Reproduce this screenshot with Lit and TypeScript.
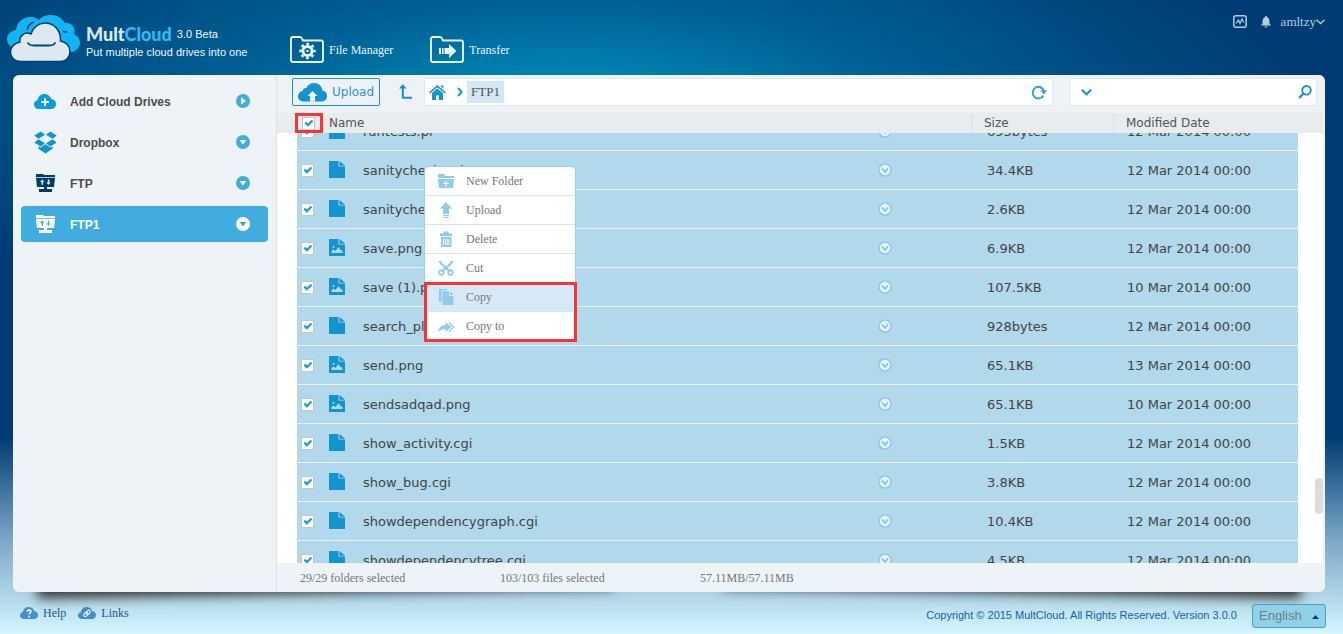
import { LitElement, html, css, svg, nothing } from "lit";
import { customElement, state } from "lit/decorators.js";
import { classMap } from "lit/directives/class-map.js";

interface FileRow {
  name: string;
  kind: "file" | "image";
  size: string;
  date: string;
}

const FILES: FileRow[] = [
  { name: "runtests.pl", kind: "file", size: "693bytes", date: "12 Mar 2014 00:00" },
  { name: "sanitycheck.cgi", kind: "file", size: "34.4KB", date: "12 Mar 2014 00:00" },
  { name: "sanitycheck.pl", kind: "file", size: "2.6KB", date: "12 Mar 2014 00:00" },
  { name: "save.png", kind: "image", size: "6.9KB", date: "12 Mar 2014 00:00" },
  { name: "save (1).png", kind: "image", size: "107.5KB", date: "10 Mar 2014 00:00" },
  { name: "search_plugin.cgi", kind: "file", size: "928bytes", date: "12 Mar 2014 00:00" },
  { name: "send.png", kind: "image", size: "65.1KB", date: "13 Mar 2014 00:00" },
  { name: "sendsadqad.png", kind: "image", size: "65.1KB", date: "10 Mar 2014 00:00" },
  { name: "show_activity.cgi", kind: "file", size: "1.5KB", date: "12 Mar 2014 00:00" },
  { name: "show_bug.cgi", kind: "file", size: "3.8KB", date: "12 Mar 2014 00:00" },
  { name: "showdependencygraph.cgi", kind: "file", size: "10.4KB", date: "12 Mar 2014 00:00" },
  { name: "showdependencytree.cgi", kind: "file", size: "4.5KB", date: "12 Mar 2014 00:00" },
];

const CLOUD = "M5 15C2 15 0 13 0 10.5 0 8.3 1.6 6.6 3.6 6.2 4.2 2.6 7.2 0 11 0c3.400 0 6 2 7 5 3 .2 5 2.300 5 5s-2 5-5 5z";

const icons = {
  addCloud: html`<svg width="22" height="15" viewBox="0 0 23 15" preserveAspectRatio="none"><path d=${CLOUD} fill="#0a9bdc" /><path d="M11.500 4v8M7.500 8h8" stroke="#fff" stroke-width="1.800" /></svg>`,
  dropbox: html`<svg width="23" height="23" viewBox="0 0 23 23" fill="#1294d0"><path d="M6.800.5 11 3.800 4.500 7.700.3 4.500zM16.200.5 12 3.800l6.500 3.900 4.200-3.200zM.3 11.500 4.500 8.200l6.500 4L6.800 15.500zM22.700 11.500l-4.200-3.300-6.500 4 4.200 3.300zM11.500 13l4.700 3.500 2.300-1.300v2.600l-7 4.600-7-4.600v-2.600l2.300 1.300z" /></svg>`,
  ftp: (fg: string, bg: string) => html`<svg width="19" height="18" viewBox="0 0 19 18"><path d="M0 0h7l1 1h11v2.300H0z" fill=${fg} /><path d="M0 4h19l-1 9H1z" fill=${fg} /><path d="M8 12h3v3h5v3H3v-3h5z" fill=${fg} /><path d="M6.300 5.500 8.500 8H7v2.800H5.500V8H4zM12.500 10.800 10.300 8.500h1.500v-3h1.500v3h1.500z" fill=${bg} /></svg>`,
  play: html`<svg width="14" height="14" viewBox="0 0 14 14"><circle cx="7" cy="7" r="7" fill="#41add8" /><path d="M5.200 3.500v7L9.800 7z" fill="#fff" /></svg>`,
  drop: (bg: string, fg: string) => html`<svg width="14" height="14" viewBox="0 0 14 14"><circle cx="7" cy="7" r="7" fill=${bg} /><path d="M3.800 5h6.400L7 9.500z" fill=${fg} /></svg>`,
  logo: html`<svg width="74" height="47" viewBox="0 0 74 47"><g fill="#13b4f4"><path d="M7 33C2 31 0 28 0 24c0-4 3-8 9-9C10 7 16 2 23 2c4 0 7 1 9 3C35 1 40 0 44 0c6 0 11 3 14 8 7-1 11 5 9 11 4 2 6 5 6 9 0 4-3 7-7 9z" /></g><path d="M20 15c1-4 4-7 7-8M60 17c-2 0-3 0-4-1" stroke="#004078" stroke-width="1.500" fill="none" /><path d="M13 46.500C7 46.500 3.500 42 3.500 37c0-5 4-9 9.500-10-1-6 5-11 11-8 2-7 8-11 14-11 9 0 16 7 15.500 18 5.500 1 9.500 5 9.500 10.500 0 6-4 10-10 10z" fill="#dfe7ef" stroke="#004078" stroke-width="1.500" /><path d="M21 28c1 2.500 3 2.500 6 2.500h15c3 0 5 0 6-2.500" stroke="#004a80" stroke-width="1.800" fill="none" stroke-linecap="round" /></svg>`,
  gearFolder: html`<svg width="34" height="27" viewBox="0 0 34 27" fill="none"><path d="M1 24V3q0-2 2-2h7q1.500 0 2.300 2l.5 1.500H31q2 0 2 2V24q0 2-2 2H3q-2 0-2-2z" stroke="#e8f4fb" stroke-width="1.900" /><circle cx="17.500" cy="15" r="4.600" stroke="#e8f4fb" stroke-width="3" /><circle cx="17.500" cy="15" r="7" stroke="#e8f4fb" stroke-width="2.400" stroke-dasharray="2.750 2.750" stroke-dashoffset="1.400" /><circle cx="17.500" cy="15" r="1.300" fill="#e8f4fb" /></svg>`,
  transferFolder: html`<svg width="34" height="27" viewBox="0 0 34 27" fill="none"><path d="M1 24V3q0-2 2-2h7q1.500 0 2.300 2l.5 1.500H31q2 0 2 2V24q0 2-2 2H3q-2 0-2-2z" stroke="#e8f4fb" stroke-width="1.900" /><path d="M9 12h2v6H9zM12 12h1.500v6H12zM14.500 12H19V8l7.500 7-7.500 7v-4h-4.500z" fill="#e8f4fb" /></svg>`,
  activity: html`<svg width="14" height="13" viewBox="0 0 14 13" fill="none" stroke="#b3cddd"><rect x=".8" y=".8" width="12.400" height="11.400" rx="2" stroke-width="1.500" /><path d="M3 8.500 5.500 5l1.500 3.500L9 4l1.800 3.500" stroke-width="1.200" /></svg>`,
  bell: html`<svg width="10" height="12" viewBox="0 0 10 12" fill="#b3cddd"><path d="M5 0q1 0 1 1 2.500.8 2.500 4v2.500L10 9.500H0l1.500-2V5q0-3.200 2.500-4 0-1 1-1zM3.500 10.200h3Q6.300 11.600 5 11.600t-1.500-1.400z" /></svg>`,
  userDown: html`<svg width="9" height="6" viewBox="0 0 9 6" fill="none"><path d="M.5.800 4.500 4.500 8.500.800" stroke="#b3cddd" stroke-width="1.300" /></svg>`,
  upload: html`<svg width="29" height="19" viewBox="0 0 29 19"><path d="M6 18.500C2 18.500 0 16 0 13.200c0-2.700 2-4.800 4.600-5.100C4.800 6 6.500 4.800 8.300 5.200 9.500 2 12.500 0 16 0c4.800 0 8 3 8.300 7.500 3 .4 4.700 2.600 4.700 5.500 0 3-2 5.500-5.500 5.500z" fill="#1493cf" /><path d="M14.500 8 19.500 13H17v5.500h-5V13H9.500z" fill="#eef2f7" /></svg>`,
  upLevel: html`<svg width="13" height="15" viewBox="0 0 13 15"><path d="M3.700 0 7.500 4.500H4.800v8.300H13v2H2.800V4.500H0z" fill="#1493cf" /></svg>`,
  home: html`<svg width="17" height="15" viewBox="0 0 17 15" fill="#1493cf"><path d="M8.300 0 17 7.500l-1 1L8.300 2.300 1 8.500 0 7.500zM12 .5h2.200v3L12 1.800zM3 8l5.300-4.400L14 8v7h-4.200v-4.500H7V15H3z" /></svg>`,
  crumbArrow: html`<svg width="6" height="10" viewBox="0 0 6 10" fill="none"><path d="M1 1l3.800 4L1 9" stroke="#1493cf" stroke-width="1.900" /></svg>`,
  refresh: html`<svg width="16" height="15" viewBox="0 0 16 15"><path d="M12.500 10.500A5.800 5.800 0 1 1 13 6" fill="none" stroke="#2a9fd0" stroke-width="1.900" /><path d="M9.300 5.500H16L12.800 9.300z" fill="#2a9fd0" /></svg>`,
  searchDown: html`<svg width="11" height="7" viewBox="0 0 11 7" fill="none"><path d="M.8.800 5.500 5.300 10.200.800" stroke="#1493cf" stroke-width="2" /></svg>`,
  magnifier: html`<svg width="14" height="14" viewBox="0 0 14 14" fill="none" stroke="#1493cf"><circle cx="8.500" cy="5.300" r="4.300" stroke-width="1.900" /><path d="M5.300 8.700 1 13" stroke-width="2.300" /></svg>`,
  file: html`<svg width="16" height="17" viewBox="0 0 16 17" fill="#1493cf"><path d="M0 0h9.500v5.500H16V17H0z" /><path d="M10.500 0 16 4.700h-5.500z" /></svg>`,
  image: html`<svg width="16" height="17" viewBox="0 0 16 17" fill="#1493cf"><path d="M0 0h9.500v5.500H16V17H0z" /><path d="M10.500 0 16 4.700h-5.500z" /><path d="M2.500 14v-2l2-1.500 2 1.500 3-4 2 3 2 .5V14z" fill="#b1d8eb" /><circle cx="4.500" cy="8" r="1" fill="#b1d8eb" /></svg>`,
  more: html`<svg width="14" height="14" viewBox="0 0 14 14" fill="none" stroke="#7cc0ee"><circle cx="7" cy="7" r="6" fill="#e6f3fb" stroke-width="1.100" /><path d="M4 5.400 7 9l3-3.600" stroke-width="1.600" /></svg>`,
  cloudHelp: html`<svg width="18" height="12" viewBox="0 0 23 15" preserveAspectRatio="none"><path d=${CLOUD} fill="#468dcb" /><path d="M9.300 6q0-2.300 2.300-2.300T14 5.700q0 1.300-1.200 1.900T11.600 9.300M11.600 11v2" stroke="#fff" stroke-width="1.900" fill="none" /></svg>`,
  cloudLink: html`<svg width="18" height="12" viewBox="0 0 23 15" preserveAspectRatio="none"><path d=${CLOUD} fill="#468dcb" /><g transform="rotate(-42 11.500 8)" fill="none" stroke="#fff" stroke-width="1.300"><rect x="6.500" y="6" width="6" height="4" rx="2" /><rect x="10.500" y="6" width="6" height="4" rx="2" /></g></svg>`,
};

const MENU = [
  { label: "New Folder", icon: svg`<path d="M0 1h6l1 2h9v2H0zM0 6h16l-1 9H1z" /><path d="M8 7.500v6M5 10.500h6" stroke="#fff" stroke-width="1.200" />` },
  { label: "Upload", icon: svg`<path d="M8 0l6 6.500h-3V12H5V6.500H2zM5 13h6v1H5zM5 15h6v1H5z" />` },
  { label: "Delete", icon: svg`<path d="M2 2.500h3.500V.5h5v2H14V5H2zM3 6h10.500v10H3z" /><path d="M5.500 8v6M7.300 8v6M9.200 8v6M11 8v6" stroke="#fff" stroke-width=".9" />` },
  { label: "Cut", icon: svg`<g fill="none" stroke="#8fcbea" stroke-width="2.200"><path d="M1.500 1Q3 4 8 8t3 3M14.500 1Q13 4 8 8t-3 3" /><circle cx="3.500" cy="12.500" r="2.300" stroke-width="1.700" /><circle cx="12.500" cy="12.500" r="2.300" stroke-width="1.700" /></g>` },
  { label: "Copy", icon: svg`<path d="M1 0h8v1.300H3.500V13H1zM4.500 2.300h6.500V7h4.500v9h-11zM12 2.300 15.500 6H12z" />` },
  { label: "Copy to", icon: svg`<path d="M0 14Q1 7 7.500 7V4l6 5-6 5v-3Q3 11 0 14z" /><path d="M11 4.500 15.700 9 11 13.500" fill="none" stroke="#8fcbea" stroke-width="1.200" />` },
];

@customElement("file-table")
export class FileTable extends LitElement {
  static styles = css`
    :host {
      display: block;
      position: relative;
      min-height: 0;
      flex: 1;
      font: 13px/18px "DejaVu Sans", Verdana, sans-serif;
      color: #444;
    }
    .port {
      height: 100%;
      overflow-y: auto;
      scrollbar-width: none;
    }
    table {
      width: 100%;
      table-layout: fixed;
      border-spacing: 0;
    }
    th, td { padding: 0; text-align: left; font-weight: normal; }
    .edge-start { width: 20px; }
    .col-check { width: 32px; }
    .col-size { width: 142px; }
    .col-date { width: 185px; }
    .edge-end { width: 25px; }
    th {
      position: sticky;
      top: 0;
      z-index: 1;
      height: 20px;
      background: #e8ecef;
      color: #555;
      font-size: 12px;
    }
    th.split { box-sizing: border-box; padding-left: 12px; border-left: 1px solid #dde1e5; }
    td {
      box-sizing: border-box;
      height: 39px;
      background: #b1d8eb;
      border-bottom: 1px solid #e9f1f5;
    }
    td.blank { background: #fff; border-color: #fff; }
    td.size, td.date { padding-top: 2px; }
    td.size { padding-left: 16px; }
    td.date { padding-left: 14px; }
    .name { display: flex; align-items: center; }
    .name svg { display: block; flex: none; }
    .name .label { flex: 1; padding: 2px 0 0 18px; }
    .glyph { padding-bottom: 2px; }
    .more { border: 0; background: none; padding: 0; margin-right: 79px; cursor: pointer; }
    .tick {
      appearance: none;
      display: block;
      box-sizing: border-box;
      width: 13px;
      height: 13px;
      margin: 0 0 0 4px;
      border: 1px solid #c3c7ca;
      background: #fff;
    }
    .tick:checked {
      background: #fff url("data:image/svg+xml,%3Csvg xmlns='http://www.w3.org/2000/svg' viewBox='0 0 10 10'%3E%3Cpath d='M1.300 4.600l2.600 2.500 4.600-4.600' fill='none' stroke='%231a9fdc' stroke-width='2.200'/%3E%3C/svg%3E") center / 10px 10px no-repeat;
    }
    .marked {
      box-sizing: border-box;
      width: 28px;
      height: 20px;
      margin-left: -2px;
      border: 3px solid #f93434;
      display: flex;
      align-items: center;
    }
    .thumb {
      position: absolute;
      right: 0;
      top: 81%;
      width: 8px;
      height: 36px;
      border-radius: 4px;
      background: #dcdcdc;
    }
  `;

  firstUpdated() {
    const port = this.renderRoot.querySelector(".port");
    if (port) port.scrollTop = 21;
  }

  render() {
    return html`
      <div class="port">
        <table>
          <colgroup>
            <col class="edge-start" /><col class="col-check" /><col /><col class="col-size" /><col class="col-date" /><col class="edge-end" />
          </colgroup>
          <thead>
            <tr>
              <th></th>
              <th><div class="marked"><input class="tick" type="checkbox" aria-label="Select all" checked /></div></th>
              <th>Name</th>
              <th class="split">Size</th>
              <th class="split">Modified Date</th>
              <th></th>
            </tr>
          </thead>
          <tbody>
            ${FILES.map(
              (f) => html`<tr>
                <td class="blank"></td>
                <td><input class="tick" type="checkbox" aria-label=${f.name} checked /></td>
                <td>
                  <div class="name">
                    <span class="glyph">${f.kind === "image" ? icons.image : icons.file}</span>
                    <span class="label">${f.name}</span>
                    <button class="more" aria-label="More">${icons.more}</button>
                  </div>
                </td>
                <td class="size">${f.size}</td>
                <td class="date">${f.date}</td>
                <td class="blank"></td>
              </tr>`
            )}
          </tbody>
        </table>
      </div>
      <div class="thumb"></div>
    `;
  }
}

@customElement("app-root")
export class AppRoot extends LitElement {
  @state() private hovered = "Copy";

  static styles = css`
    :host {
      display: flex;
      flex-direction: column;
      height: 100vh;
      font: 12px/16px "Liberation Serif", "Times New Roman", serif;
      color: #666;
      background:
        radial-gradient(ellipse 740px 230px at 42% 105px, rgba(0, 155, 200, 0.9), rgba(0, 125, 175, 0.55) 45%, rgba(0, 60, 115, 0) 100%) no-repeat,
        linear-gradient(#003c73 0, #003c73 69%, #7aa6c7 85%, #abd0e2 93%, #d4f7fe 100%);
    }
    button, input, select { font: inherit; color: inherit; }
    button { border: 0; background: none; padding: 0; cursor: pointer; display: flex; align-items: center; }
    a { color: inherit; text-decoration: none; display: flex; align-items: center; }
    svg { display: block; flex: none; }

    .top { display: flex; height: 75px; box-sizing: border-box; padding: 14px 18px 0 7px; }
    .brand { display: flex; gap: 5px; width: 283px; color: #eef6fb; font: 11px/18px "Liberation Sans", Arial, sans-serif; }
    .brand-text { padding-top: 11px; }
    .brand-line { display: flex; gap: 5px; }
    .wordmark { font: 900 18px/18px Lato, sans-serif; color: #dfe9f1; }
    .wordmark b { font-weight: 900; color: #2fb9f5; }
    .brand svg { margin-top: 1px; }
    .nav { flex: 1; display: flex; gap: 37px; padding-top: 22px; align-items: flex-start; color: #e8f4fb; }
    .nav a { gap: 5px; }
    .account { display: flex; align-items: center; height: 15px; color: #b3cddd; font-size: 13px; }
    .account .bell { margin: 0 10px 0 14px; }

    .panel { position: relative; z-index: 0; flex: 1; min-height: 0; display: flex; margin: 0 18px 0 13px; }
    .panel::before, .panel::after {
      content: "";
      position: absolute;
      z-index: -1;
      bottom: 10px;
      width: 44%;
      height: 60px;
      box-shadow: 0 16px 12px #333;
    }
    .panel::before { left: 24px; transform: rotate(-1deg); transform-origin: 0 100%; }
    .panel::after { right: 24px; transform: rotate(1deg); transform-origin: 100% 100%; }

    .side { box-sizing: border-box; width: 264px; border-right: 1px solid #dde2e6; border-radius: 6px 0 0 6px; background: #edf3f6; padding: 8px 8px 0; font: bold 12px/16px "Liberation Sans", Arial, sans-serif; color: #4c4c4c; }
    .side ul, .menu { list-style: none; margin: 0; padding: 0; }
    .side li + li { margin-top: 5px; }
    .drive { width: 100%; height: 36px; border-radius: 4px; padding: 0 18px 0 12px; text-align: left; }
    .drive.active { background: #41addf; color: #fff; }
    .drive-icon { width: 24px; display: flex; justify-content: center; }
    .drive-name { flex: 1; padding: 2px 0 0 13px; }

    .main { flex: 1; min-width: 0; display: flex; flex-direction: column; background: #fff; border-right: 2px solid #edf3f6; border-radius: 0 6px 6px 0; overflow: hidden; }
    .tools { height: 38px; box-sizing: border-box; display: flex; align-items: flex-start; padding: 3px 6px 0 15px; background: #eef2f7; }
    .upload { box-sizing: border-box; width: 88px; height: 28px; border: 1px solid #1493cf; border-radius: 2px; padding: 0 5px; gap: 5px; color: #2b94c6; font: 12px/16px "DejaVu Sans", Verdana, sans-serif; }
    .level { width: 44px; height: 26px; justify-content: center; padding-left: 6px; box-sizing: border-box; }
    .path, .search { box-sizing: border-box; height: 28px; display: flex; align-items: center; background: #fff; border: 1px solid #e3e7eb; }
    .path { flex: 1; padding: 0 5px 0 4px; }
    .path .next { margin: 0 4px 0 11px; }
    .crumb { height: 22px; padding: 0 4px; background: #d2e8f5; font-size: 13px; color: #555; }
    .refresh { margin-left: auto; }
    .search { width: 248px; margin-left: 16px; padding: 0 4px 0 11px; }
    .search input { flex: 1; min-width: 0; border: 0; outline: 0; background: none; }

    .status { height: 29px; display: flex; align-items: center; padding-left: 23px; background: #edf3f6; color: #777; }
    .status span { width: 200px; }

    .menu { position: absolute; left: 411px; top: 91px; width: 152px; box-sizing: border-box; border: 1px solid #9fcdf0; border-radius: 5px; background: #fff; overflow: hidden; }
    .menu li + li { border-top: 1px solid #cde5f6; }
    .menu button { width: 100%; height: 28px; padding-left: 13px; gap: 12px; color: #777; }
    .menu .hover { background: #d6e9f7; }
    .ring { position: absolute; left: 411px; top: 207px; width: 153px; height: 60px; box-sizing: border-box; border: 3px solid #f93434; pointer-events: none; }

    .foot { height: 42px; display: flex; align-items: center; padding: 0 17px 0 20px; color: #1f558c; }
    .foot a { gap: 5px; margin-right: 12px; }
    .copy { margin-left: auto; padding: 4px 15px 0 0; font: 11px/16px "Liberation Sans", Arial, sans-serif; color: #1560ac; }
    .lang { position: relative; margin-top: 6px; }
    .lang select { appearance: none; display: block; width: 74px; height: 24px; padding: 0 6px; border: 1px solid #4f9acb; border-radius: 3px; background: #8fd2e8; color: #6f7f88; font: 13px/18px "Liberation Sans", Arial, sans-serif; }
    .lang svg { position: absolute; right: 7px; top: 11px; pointer-events: none; }
  `;

  private drive(name: string, icon: unknown, arrow: unknown, active = false) {
    return html`<li>
      <button class=${classMap({ drive: true, active })} aria-current=${active ? "true" : nothing}>
        <span class="drive-icon">${icon}</span><span class="drive-name">${name}</span>${arrow}
      </button>
    </li>`;
  }

  render() {
    const blueDrop = icons.drop("#41add8", "#fff");
    return html`
      <header class="top">
        <div class="brand">
          ${icons.logo}
          <div class="brand-text">
            <div class="brand-line"><span class="wordmark">Mult<b>Cloud</b></span><span>3.0 Beta</span></div>
            <div>Put multiple cloud drives into one</div>
          </div>
        </div>
        <nav class="nav">
          <a href="#files">${icons.gearFolder}File Manager</a>
          <a href="#transfer">${icons.transferFolder}Transfer</a>
        </nav>
        <div class="account">
          <button aria-label="Activity">${icons.activity}</button>
          <button class="bell" aria-label="Notifications">${icons.bell}</button>
          <button>amltzy${icons.userDown}</button>
        </div>
      </header>

      <div class="panel">
        <aside class="side">
          <ul>
            ${this.drive("Add Cloud Drives", icons.addCloud, icons.play)}
            ${this.drive("Dropbox", icons.dropbox, blueDrop)}
            ${this.drive("FTP", icons.ftp("#003c6c", "#edf3f6"), blueDrop)}
            ${this.drive("FTP1", icons.ftp("#fff", "#41addf"), icons.drop("#fff", "#2f9fd0"), true)}
          </ul>
        </aside>
        <main class="main">
          <div class="tools">
            <button class="upload">${icons.upload}Upload</button>
            <button class="level" aria-label="Up one level">${icons.upLevel}</button>
            <nav class="path">
              <a href="#home" aria-label="Home">${icons.home}</a>
              <span class="next">${icons.crumbArrow}</span>
              <a class="crumb" href="#ftp1">FTP1</a>
              <button class="refresh" aria-label="Refresh">${icons.refresh}</button>
            </nav>
            <form class="search">
              <button type="button" aria-label="Search options">${icons.searchDown}</button>
              <input type="text" aria-label="Search" />
              <button type="button" aria-label="Search">${icons.magnifier}</button>
            </form>
          </div>
          <file-table></file-table>
          <div class="status">
            <span>29/29 folders selected</span><span>103/103 files selected</span><span>57.11MB/57.11MB</span>
          </div>
        </main>
        <ul class="menu">
          ${MENU.map(
            (m) => html`<li>
              <button class=${classMap({ hover: this.hovered === m.label })} @mouseenter=${() => (this.hovered = m.label)}>
                <svg width="16" height="16" viewBox="0 0 16 16" fill="#8fcbea">${m.icon}</svg>${m.label}
              </button>
            </li>`
          )}
        </ul>
        <div class="ring"></div>
      </div>

      <footer class="foot">
        <a href="#help">${icons.cloudHelp}Help</a>
        <a href="#links">${icons.cloudLink}Links</a>
        <span class="copy">Copyright © 2015 MultCloud. All Rights Reserved. Version 3.0.0</span>
        <div class="lang">
          <select aria-label="Language"><option>English</option></select>
          <svg width="7" height="4" viewBox="0 0 7 4"><path d="M3.500 0 7 4H0z" fill="#00417a" /></svg>
        </div>
      </footer>
    `;
  }
}
